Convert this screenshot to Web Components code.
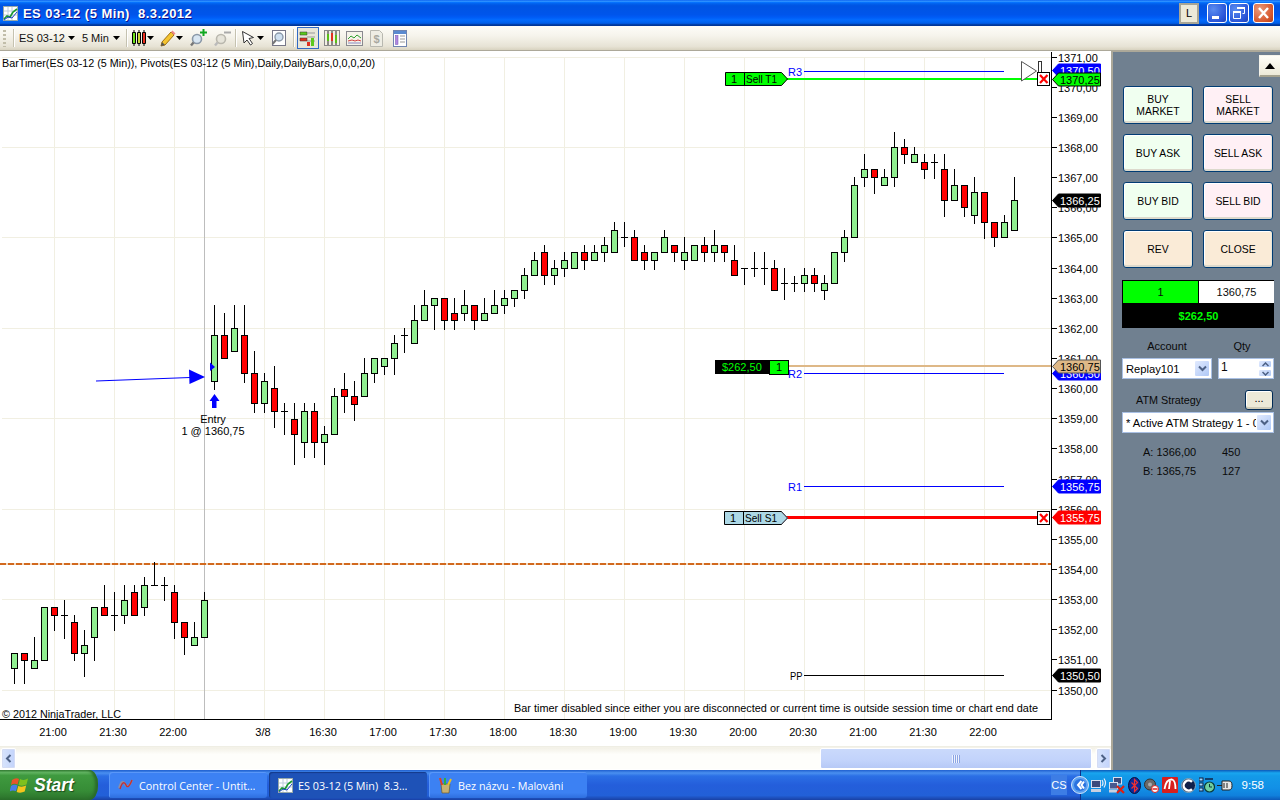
<!DOCTYPE html>
<html><head><meta charset="utf-8"><title>ES 03-12</title>
<style>
html,body{margin:0;padding:0;width:1280px;height:800px;overflow:hidden;background:#fff;font-family:"Liberation Sans",Arial,sans-serif;}
</style></head><body>
<xp-desktop>
  <xp-titlebar slot="title">ES 03-12 (5 Min)&nbsp; 8.3.2012</xp-titlebar>
  <chart-toolbar slot="toolbar"></chart-toolbar>
  <price-chart slot="chart"></price-chart>
  <h-scrollbar slot="scroll"></h-scrollbar>
  <trade-panel slot="panel"></trade-panel>
  <xp-taskbar slot="taskbar"></xp-taskbar>
</xp-desktop>
<script>
function el(name, css, html, after){
  customElements.define(name, class extends HTMLElement{
    constructor(){super();this.attachShadow({mode:'open'}).innerHTML='<style>'+css+'</style>'+html;}
    connectedCallback(){if(after)after(this.shadowRoot,this);}
  });
}
el('xp-desktop',`:host{display:grid;width:1280px;height:800px;grid-template-columns:1111px 169px;grid-template-rows:26px 25px 1fr 30px;}
  .t{grid-column:1/3;display:block}.b{grid-column:1/3}.left{display:flex;flex-direction:column;min-width:0}
`,`<div class="t"><slot name="title"></slot></div><div class="t"><slot name="toolbar"></slot></div>
<div class="left"><slot name="chart"></slot><slot name="scroll"></slot></div><slot name="panel"></slot><div class="b"><slot name="taskbar"></slot></div>`);

el('xp-titlebar',`:host{display:flex;align-items:center;height:26px;box-sizing:border-box;padding:0 3px;color:#fff;
  background:linear-gradient(180deg,#0058ee 0,#3593ff 4%,#288eff 6%,#127dff 8%,#036ffc 10%,#0262ee 14%,#0057e5 20%,#0054e3 24%,#0055eb 56%,#005bf5 66%,#026afe 76%,#0062ef 86%,#0052d6 92%,#0040ab 94%,#003092 100%);}
  .txt{font:bold 13px "Liberation Sans",sans-serif;margin-left:5px;flex:1;letter-spacing:.45px;text-shadow:1px 1px 0 #0f1089;white-space:pre}
  .l{width:20px;height:21px;box-sizing:border-box;border:2px solid #a8a595;background:#ece9d8;color:#000;font:11px "Liberation Sans",sans-serif;display:flex;align-items:center;justify-content:center;margin-right:8px}
  .w{width:20px;height:20px;box-sizing:border-box;border:1px solid #fff;border-radius:3px;background:radial-gradient(circle at 30% 30%,#5a8cf0,#2a55d8 70%,#1f43b4);margin-right:2px;display:block}
  .w.c{background:radial-gradient(circle at 30% 30%,#ea9a7c,#d85a30 65%,#b83c14);margin:0 3px 0 2px;width:21px}
`,`<svg width="15" height="15" viewBox="0 0 15 15"><rect x=".5" y=".5" width="14" height="14" fill="#fff" stroke="#9aa"/><path d="M1 5h13M1 9h13M5 1v13M9 1v13" stroke="#bcd" /><path d="M1 13l3-3 3 1 3-5 4-3" stroke="#1a9a30" stroke-width="1.6" fill="none"/><path d="M1 14l4-3 4 1 5-6" stroke="#1a40c0" fill="none"/></svg>
<span class="txt"><slot></slot></span><span class="l">L</span>
<span class="w"><svg width="18" height="18"><rect x="4" y="12" width="7" height="3" fill="#fff"/></svg></span>
<span class="w"><svg width="18" height="18"><path d="M7.5 3.5h7v6h-2M3.5 7.5h7v7h-7z" fill="none" stroke="#fff"/><path d="M7 4h8M3 8h8" stroke="#fff" stroke-width="2"/></svg></span>
<span class="w c"><svg width="19" height="18"><path d="M5 4l9 10M14 4l-9 10" stroke="#fff" stroke-width="2.4"/></svg></span>`);

const arrow=(m)=>`<svg style="margin-left:${m}px" width="7" height="4" viewBox="0 0 7 4"><path d="M0 0h7L3.5 4z" fill="#000"/></svg>`;
el('chart-toolbar',`:host{display:flex;align-items:center;height:25px;box-sizing:border-box;padding-left:3px;border-bottom:1px solid #aca899;background:linear-gradient(180deg,#fdfcf8 0,#f6f4ec 40%,#e7e3d5 85%,#d8d3c0 100%);font:11px "Liberation Sans",sans-serif;color:#111}
  .grip{width:3px;height:17px;background:repeating-linear-gradient(180deg,#c1bda9 0 2px,transparent 2px 4px);margin-right:7px}
  .sep{width:1px;height:18px;background:#c5c2b0;border-right:1px solid #fff}
  .i{display:flex;align-items:center;height:24px}
  svg{display:block}
  .act{width:22px;height:22px;box-sizing:border-box;border:1px solid #316ac5;background:#e8e6d9;display:flex;align-items:center;justify-content:center;margin-left:2px}
`,`<span class="grip"></span><span class="sep"></span>
<span class="i" style="margin-left:4px">ES 03-12${arrow(3)}</span>
<span class="i" style="margin-left:7px">5 Min${arrow(4)}</span>
<span class="sep" style="margin-left:6px"></span>
<span class="i" style="margin-left:3px"><svg width="16" height="18" viewBox="0 0 16 18"><g stroke="#000" stroke-linejoin="round"><rect x="1.5" y="3.5" width="3" height="11" fill="#6ee21a"/><rect x="6.5" y="3.5" width="3" height="11" fill="#c8d838"/><rect x="11.5" y="3.5" width="3" height="11" fill="#ee3020"/><path d="M3 1v2M3 15v2M8 1v2M8 15v2M13 1v2M13 15v2"/></g></svg>${arrow(0)}</span>
<span class="i" style="margin-left:6px"><svg width="16" height="18" viewBox="0 0 16 18"><path d="M2 13L11 3l3 3-9 10-4 1z" fill="#f4c430" stroke="#a07010"/><path d="M11 3l1.5-1.5 3 3L14 6z" fill="#e88"/><path d="M1 17l1-4 3 3z" fill="#555"/></svg>${arrow(0)}</span>
<span class="i" style="margin-left:7px"><svg width="17" height="18" viewBox="0 0 17 18"><circle cx="7" cy="10" r="4.5" fill="#d8e6f2" stroke="#8a98a8" stroke-width="1.6"/><path d="M3.5 13.5L1 16.5" stroke="#777" stroke-width="2.4"/><path d="M13.5 0v7M10 3.5h7" stroke="#10a820" stroke-width="2"/></svg></span>
<span class="i" style="margin-left:7px"><svg width="17" height="18" viewBox="0 0 17 18"><circle cx="7" cy="10" r="4.5" fill="#e6e4da" stroke="#bab8ae" stroke-width="1.6"/><path d="M3.5 13.5L1 16.5" stroke="#bbb" stroke-width="2.4"/><path d="M10 3.5h7" stroke="#aaa" stroke-width="2"/></svg></span>
<span class="sep" style="margin-left:4px"></span>
<span class="i" style="margin-left:4px"><svg width="14" height="16" viewBox="0 0 14 16"><path d="M1.5 1.5l11 6-4.5 1 3.5 5-2 1.5-3.5-5-3 3z" fill="#fff" stroke="#333"/></svg>${arrow(2)}</span>
<span class="i" style="margin-left:7px"><svg width="15" height="17" viewBox="0 0 15 17"><rect x="1.5" y=".5" width="13" height="15" fill="#fff" stroke="#778"/><circle cx="8" cy="7" r="4" fill="#cfe0f0" stroke="#8a98a8" stroke-width="1.4"/><path d="M5 10l-3.5 4" stroke="#777" stroke-width="2"/></svg></span>
<span class="sep" style="margin-left:7px"></span>
<span class="act"><svg width="17" height="18" viewBox="0 0 17 18"><path d="M1 3h7v3H1z" fill="#5bc81c" stroke="#333" stroke-width=".5"/><path d="M8 4h8M8 8h8M8 12h8" stroke="#999"/><path d="M1 9h7v3H1z" fill="#e03020" stroke="#333" stroke-width=".5"/><rect x="12" y="9" width="3" height="8" fill="#5bc81c"/><rect x="8" y="13" width="3" height="4" fill="#e03020"/></svg></span>
<span class="i" style="margin-left:5px"><svg width="16" height="18" viewBox="0 0 16 18"><rect x=".5" y="1.5" width="15" height="15" fill="#f2f0e4" stroke="#888"/><path d="M4 2v14M8 2v14M12 2v14" stroke="#222"/><rect x="3" y="5" width="2" height="7" fill="#58c018"/><rect x="7" y="4" width="2" height="8" fill="#e03020"/><rect x="11" y="6" width="2" height="8" fill="#58c018"/></svg></span>
<span class="i" style="margin-left:6px"><svg width="17" height="17" viewBox="0 0 17 17"><rect x=".5" y="1.5" width="16" height="14" fill="#f5f3ea" stroke="#8a8a90"/><path d="M2 9l3-3 3 2 3-3 4 3" stroke="#30a030" fill="none"/><path d="M2 11l4-1 3 1 3-1 3 1" stroke="#d04040" fill="none"/><path d="M2 13h13" stroke="#8888c0"/></svg></span>
<span class="i" style="margin-left:7px"><svg width="13" height="17" viewBox="0 0 13 17"><path d="M.5 .5h9l3 3v13H.5z" fill="#eeede4" stroke="#b8b8b0"/><text x="6.5" y="13" text-anchor="middle" font-size="11" font-weight="bold" fill="#a8a8a0" font-family="Liberation Sans">$</text></svg></span>
<span class="i" style="margin-left:10px"><svg width="14" height="17" viewBox="0 0 14 17"><rect x=".5" y=".5" width="13" height="16" fill="#fff" stroke="#6f84b0"/><rect x="1" y="1" width="12" height="3" fill="#5a8ad0"/><rect x="2.500" y="5.500" width="2.500" height="9" fill="#b088e0" stroke="#7050b0" stroke-width=".5"/><path d="M7 6h5M7 9h5M7 12h5" stroke="#999"/></svg></span>`);

const Y=p=>Math.floor(690-(p-1350)*30.14)+.5;
const candles=[
[14,653,653,668,683,1],[24,653,653,660,683,0],[34,637,660,668,668,1],[44,607,607,660,660,1],[54,607,607,615,630,0],[64,600,615,615,638,2],[74,615,622,653,660,0],[84,630,645,653,676,1],[94,607,607,637,660,1],[104,585,607,615,615,0],[114,592,615,615,630,2],[124,585,600,615,623,1],[134,585,592,615,615,0],[144,577,585,607,615,1],[154,562,585,585,585,2],[164,577,585,585,600,2],[174,585,592,622,638,0],[184,622,622,637,654,0],[194,622,637,645,645,1],[204,592,600,637,637,1],
[214,305,335,381,389,1],[224,313,335,358,358,0],[234,305,328,351,351,1],[244,305,335,373,382,0],[254,351,373,403,412,0],[264,373,381,403,412,1],[274,366,388,411,427,0],[284,403,411,411,434,2],[294,403,419,434,464,0],[304,403,411,442,457,1],[314,403,411,442,457,0],[324,426,434,442,464,1],[334,388,396,434,434,1],[344,373,389,396,412,0],[354,381,396,404,420,0],[364,358,373,396,396,1],[374,358,358,373,382,1],[384,358,358,366,374,1],[394,335,343,358,374,1],[404,328,335,335,352,2],[414,305,320,343,343,1],[424,290,305,320,320,1],[434,298,298,305,329,1],[444,298,298,320,329,0],[454,298,313,320,329,0],[464,290,305,313,320,1],[474,305,305,320,329,0],[484,298,313,320,320,1],[494,290,305,313,313,1],[504,290,298,305,313,1],[514,290,290,298,306,1],[524,268,275,290,298,1],[534,252,260,275,275,1],[544,245,252,275,284,0],[554,260,268,275,284,1],[564,252,260,268,276,1],[574,252,252,268,268,1],[584,245,252,260,269,0],[594,245,252,260,260,1],[604,237,245,252,261,1],[614,222,230,252,252,1],[624,222,237,237,246,2],[634,230,237,260,260,0],[644,245,252,260,269,0],[654,252,252,260,269,1],[664,230,237,252,252,1],[674,245,245,252,261,0],[684,237,252,260,269,1],[694,245,245,260,260,1],[704,237,245,252,261,0],[714,230,245,252,261,1],[724,245,245,252,261,0],[734,245,260,275,275,0],[744,268,268,268,284,2],[754,252,268,268,276,2],[764,252,268,268,284,2],[774,260,268,290,290,0],[784,268,283,283,299,2],[794,276,283,283,291,2],[804,268,275,283,291,1],[814,268,275,283,291,0],[824,275,283,290,299,1],[834,252,252,283,283,1],[844,230,237,252,261,1],[854,177,185,237,237,1],[864,154,169,177,186,1],[874,169,169,177,193,0],[884,169,177,185,185,1],[894,132,147,177,186,1],[904,139,147,154,163,0],[914,147,154,162,162,1],[924,154,162,169,178,0],[934,154,162,162,178,2],[944,154,169,200,216,0],[954,169,185,200,200,1],[964,185,185,207,216,0],[974,177,192,215,223,1],[984,192,192,222,238,0],[994,222,222,237,246,0],[1004,215,222,237,237,1],[1014,177,200,230,230,1]];
function buildChart(){
  let s='';
  const grid='#f1efe2';
  [1371,1368,1365,1362,1359,1356,1353,1350].forEach(p=>{s+=`<path d="M2 ${Y(p)}H1051" stroke="${grid}"/>`;});
  [54,114,174,264,324,384,444,504,564,624,684,744,804,864,924,984].forEach(x=>{s+=`<path d="M${x+.5} 58V719" stroke="${grid}"/>`;});
  s+=`<path d="M204.500 58V719" stroke="#bdbdbd"/>`;
  s+=`<path d="M0 563.5H1051" stroke="#f3d9c0" stroke-width="2"/><path d="M0 563.5H1051" stroke="#d2691e" stroke-width="2" stroke-dasharray="6 2"/>`;
  candles.forEach(([x,wt,bt,bb,wb,c])=>{
    const cx=x+.5;
    s+=`<path d="M${cx} ${wt}V${wb+1}" stroke="#000"/>`;
    if(c===2) s+=`<path d="M${x-3} ${bt+.5}H${x+4}" stroke="#000"/>`;
    else s+=`<rect x="${x-2.5}" y="${bt+.5}" width="6" height="${bb-bt}" fill="${c?'#90ee90':'#f00'}" stroke="#000"/>`;
  });
  const T=(x,y,t,o='')=>`<text x="${x}" y="${y}" ${o}>${t}</text>`;
  const fit=n=>`textLength="${n}" lengthAdjust="spacingAndGlyphs"`;
  s+=T(2,67,'BarTimer(ES 03-12 (5 Min)), Pivots(ES 03-12 (5 Min),Daily,DailyBars,0,0,0,20)',fit(373));
  s+=T(2,718,'© 2012 NinjaTrader, LLC',fit(119));
  s+=T(514,712,'Bar timer disabled since either you are disconnected or current time is outside session time or chart end date',fit(524));
  // pivots
  [['R3',71,'#00f'],['R2',373,'#00f'],['R1',486,'#00f'],['PP',675,'#000']].forEach(([n,y,c])=>{
    s+=`<path d="M804 ${y+.5}H1004" stroke="${c}"/>`+T(n==='PP'?790:788,y+5,n,`fill="${c}" ${n==='PP'?fit(12.5):''}`);
  });
  // entry
  s+=`<path d="M96 381L190 377.500" stroke="#00f" stroke-width="1.2"/><path d="M189 369.500L205 377 189.500 384z" fill="#00f"/><path d="M210 362.500L215 367 210 371z" fill="#00f"/><path d="M214.500 394L219.500 401H216.500V408H212V401H209.500z" fill="#00f"/>`;
  s+=T(213,423,'Entry','text-anchor="middle"')+T(213,435,'1 @ 1360,75','text-anchor="middle"');
  // position
  s+=`<path d="M787 366H1052" stroke="#deb887" stroke-width="2"/><rect x="715" y="360" width="54" height="14" fill="#000"/><rect x="769" y="360" width="19" height="14" fill="#0f0" stroke="#000"/>`;
  s+=T(722,371,'$262,50','fill="#0f0"')+T(776,371,'1');
  // orders
  s+=`<path d="M785 78.500H1037" stroke="#0f0" stroke-width="2"/><path d="M785 517H1037" stroke="#f00" stroke-width="3"/>`;
  s+=`<path d="M725.500 72.500H781.500L787.500 79 781.500 85.500H725.500z" fill="#0f0" stroke="#000"/><path d="M744.500 72V86" stroke="#000"/>`+T(731,83,'1')+T(746,83,'Sell T1',fit(31));
  s+=`<path d="M724.500 511.500H781.500L787.500 518 781.500 524.500H724.500z" fill="#add8e6" stroke="#000"/><path d="M781.500 512L787.500 518 781.500 524" fill="none" stroke="#778"/><path d="M743.500 511V525" stroke="#000"/>`+T(730,522,'1')+T(745,522,'Sell S1',fit(32));
  s+=`<path d="M1021.500 61.500L1036.500 71 1021.500 81z" fill="#fff" stroke="#555"/>`;
  s+=`<rect x="1038.500" y="61.500" width="3" height="20" fill="#fff" stroke="#333"/>`;
  const X=(y)=>`<rect x="1037.500" y="${y+.5}" width="12" height="13" fill="#fff" stroke="#000"/><path d="M1040 ${y+3}L1047.500 ${y+11}M1047.500 ${y+3}L1040 ${y+11}" stroke="#f00" stroke-width="2.200"/>`;
  s+=X(72)+X(511);
  // axes
  s+=`<path d="M1051.500 52V720M0 719.500H1052" stroke="#000"/>`;
  for(let p=1350;p<=1371;p++){const y=Y(p);s+=`<path d="M1052 ${y}H1057" stroke="#000"/>`+T(1058,y+4,p+',00');}
  [['21:00',53],['21:30',113],['22:00',173],['3/8',263],['16:30',323],['17:00',383],['17:30',443],['18:00',503],['18:30',563],['19:00',623],['19:30',683],['20:00',743],['20:30',803],['21:00',863],['21:30',923],['22:00',983]].forEach(([t,x])=>{s+=T(x,736,t,'text-anchor="middle"');});
  // tags
  const tag=(c,fill,txt,str,v)=>`<path d="M1052.500 ${c}L1058.500 ${c-6.500}H1100.500V${c+6.500}H1058.500z" fill="${fill}" stroke="${str}"/>`+T(1060,c+4,v,`fill="${txt}"`);
  s+=tag(70.5,'#00f','#fff','#00f','1370,50')+tag(79.5,'#0f0','#000','#000','1370,25')+tag(200.5,'#000','#fff','#000','1366,25')+tag(373.5,'#00f','#fff','#00f','1360,50')+tag(366.5,'#deb887','#000','#555','1360,75')+tag(486.5,'#00f','#fff','#00f','1356,75')+tag(517.5,'#f00','#fff','#f00','1355,75')+tag(675.5,'#000','#fff','#000','1350,50');
  return s;
}
el('price-chart',`:host{display:block;width:1111px;height:695px;background:#fff;overflow:hidden;flex:none}
  svg{display:block;font:11px "Liberation Sans",Arial,sans-serif;fill:#000;shape-rendering:auto}
  path,rect{shape-rendering:crispEdges}`,
`<svg width="1111" height="695" viewBox="0 51 1111 695">${buildChart()}</svg>`,
(r)=>{r.querySelectorAll('path').forEach(p=>{const d=p.getAttribute('d');if(/L/.test(d))p.style.shapeRendering='auto';});});

el('h-scrollbar',`:host{display:flex;align-items:stretch;width:1111px;height:24px;box-sizing:border-box;padding:1px 0;background:linear-gradient(180deg,#f3f1e7,#fdfcf8 20%,#fff);border-top:1px solid #efeee4}
  .b{width:15px;margin:0 0 0 1px;box-sizing:border-box;border:1px solid #fff;border-radius:2px;background:linear-gradient(90deg,#d8e4fc,#c2d3fb);display:flex;align-items:center;justify-content:center;flex:none;box-shadow:0 0 0 1px #d4dcf4 inset}
  .tr{flex:1;display:flex;justify-content:flex-end;padding-right:3px;background:linear-gradient(180deg,#f3f1e7,#fefefb 30%)}
  .th{width:272px;box-sizing:border-box;border:1px solid #fff;border-radius:2px;background:linear-gradient(180deg,#cad9fb,#c2d3fb 60%,#b6c9f6);display:flex;align-items:center;justify-content:center}
  .g{width:8px;height:8px;background:repeating-linear-gradient(90deg,#eef3fe 0 1px,#8ca5e4 1px 2px)}`,
`<span class="b"><svg width="7" height="9" viewBox="0 0 7 9"><path d="M5.500 1L2 4.500 5.500 8" fill="none" stroke="#4d6185" stroke-width="2"/></svg></span><span class="tr"><span class="th"><span class="g"></span></span></span><span class="b"><svg width="7" height="9" viewBox="0 0 7 9"><path d="M1.500 1L5 4.500 1.500 8" fill="none" stroke="#4d6185" stroke-width="2"/></svg></span>`);

el('order-button',`:host{display:flex;align-items:center;justify-content:center;text-align:center;box-sizing:border-box;width:70px;height:38px;padding-top:2px;border:1px solid #003c74;border-radius:3px;background:var(--bg,#f0fff0);font:10.4px/12px "Liberation Sans",sans-serif;color:#000;box-shadow:inset 0 -2px 0 #dcd9cc,inset -1px 0 0 #e8e6da,inset 1px 1px 0 #fff}`,`<slot></slot>`);

el('xp-combo',`:host{display:flex;align-items:center;box-sizing:border-box;height:21px;background:#fff;border:1px solid #a9c0e4;font:11.2px "Liberation Sans",sans-serif;color:#000;padding:1px 1px 1px 3px}
  .t{flex:1;min-width:0;overflow:hidden;white-space:nowrap;padding-top:1px}
  .b{width:16px;align-self:stretch;flex:none;box-sizing:border-box;border:1px solid #fff;border-radius:2px;background:linear-gradient(135deg,#e1eafe,#aec8f7);display:flex;align-items:center;justify-content:center}`,
`<span class="t"><slot></slot></span><span class="b"><svg width="9" height="7" viewBox="0 0 9 7"><path d="M1 1.500L4.500 5 8 1.500" fill="none" stroke="#4d6185" stroke-width="2"/></svg></span>`);

el('trade-panel',`:host{display:flex;flex-direction:column;box-sizing:border-box;width:169px;height:719px;border-left:2px solid #aca899;background:#708090;color:#0a0a0a;font:11px "Liberation Sans",sans-serif;padding:3px 0 0 9px;border-top:1px solid #aca899}
  .up{align-self:flex-end;width:21px;height:22px;box-sizing:border-box;background:linear-gradient(180deg,#fffef8,#ece9d8);border:1px solid #f5f3ea;border-right:0;border-bottom:2px solid #a5a28f;display:flex;align-items:center;justify-content:center}
  .grid{display:grid;grid-template-columns:70px 70px;gap:10px;margin-top:9px;margin-left:1px}
  .buy{--bg:#f0fff0}.sell{--bg:#fff0f5}.lin{--bg:#faebd7}
  .pos{display:grid;grid-template-columns:76px 75px;grid-template-rows:22px 25px;width:152px;height:48px;box-sizing:border-box;margin-top:12px;background:#000;border:1px solid #000;column-gap:0}
  .pos div{display:flex;align-items:center;justify-content:center;font-size:11px}
  .g{background:#0f0;border-right:1px solid #000;padding-bottom:1px;box-sizing:border-box}.w{background:#fff;padding-bottom:1px;box-sizing:border-box}
  .pnl{grid-column:1/3;color:#0f0;font-weight:bold}
  .lbl{display:flex;margin-top:11px;height:14px;align-items:center}
  .lbl span{text-align:center}
  .row{display:flex;gap:6px;margin-top:5px}
  .spin{display:flex;box-sizing:border-box;width:56px;height:21px;background:#fff;border:1px solid #a9c0e4;font:12px "Liberation Sans",sans-serif;padding:1px 1px 1px 2px;justify-content:space-between}
  .sb{width:14px;display:flex;flex-direction:column;gap:1px}
  .sb i{flex:1;display:flex;align-items:center;justify-content:center;border:1px solid #fff;border-radius:2px;background:linear-gradient(135deg,#e1eafe,#aec8f7)}
  .atm{display:flex;align-items:center;justify-content:space-between;margin-top:11px;height:20px;width:151px;padding-left:14px;box-sizing:border-box}
  .atm span:first-child{font-size:10.8px}
  .dots{width:28px;height:20px;box-sizing:border-box;border:1px solid #002a55;border-radius:3px;background:#ece9d8;box-shadow:inset 0 -2px 0 #cfcbb8,inset 1px 1px 0 #fff;text-align:center;line-height:15px;color:#000}
  .q{display:grid;grid-template-columns:79px auto;row-gap:5px;margin:12px 0 0 21px;line-height:14px}
`,`<span class="up"><svg width="10" height="6"><path d="M0 6L5 0l5 6z" fill="#000"/></svg></span>
<div class="grid">
<order-button class="buy">BUY<br>MARKET</order-button><order-button class="sell">SELL<br>MARKET</order-button>
<order-button class="buy">BUY ASK</order-button><order-button class="sell">SELL ASK</order-button>
<order-button class="buy">BUY BID</order-button><order-button class="sell">SELL BID</order-button>
<order-button class="lin">REV</order-button><order-button class="lin">CLOSE</order-button></div>
<div class="pos"><div class="g">1</div><div class="w">1360,75</div><div class="pnl">$262,50</div></div>
<div class="lbl"><span style="width:90px">Account</span><span style="width:60px;margin-left:0">Qty</span></div>
<div class="row"><xp-combo style="width:90px">Replay101</xp-combo><div class="spin"><span>1</span><span class="sb"><i><svg width="7" height="5"><path d="M.5 4L3.500 1l3 3" fill="none" stroke="#4d6185" stroke-width="1.500"/></svg></i><i><svg width="7" height="5"><path d="M.5 1l3 3 3-3" fill="none" stroke="#4d6185" stroke-width="1.500"/></svg></i></span></div></div>
<div class="atm"><span>ATM Strategy</span><span class="dots">...</span></div>
<xp-combo style="width:152px;margin-top:2px">* Active ATM Strategy 1 - 0</xp-combo>
<div class="q"><span>A: 1366,00</span><span>450</span><span>B: 1365,75</span><span>127</span></div>`);

el('task-button',`:host{display:flex;align-items:center;box-sizing:border-box;width:158px;height:26px;padding:0 8px 0 9px;border-radius:3px;color:#fff;font:11px "Open Sans","Liberation Sans",sans-serif;background:linear-gradient(180deg,#3c81f3,#3c81f3 80%,#2e6ede);box-shadow:inset 1px 1px 0 #5a97f8;white-space:nowrap;overflow:hidden}
  :host([active]){background:#1e52b7;box-shadow:inset 1px 1px 1px #143a8a}
  ::slotted(svg){flex:none;margin-right:5px}
  .t{overflow:hidden;font-size:10.8px}`,`<slot name="icon"></slot><span class="t"><slot></slot></span>`);

el('xp-taskbar',`:host{display:flex;align-items:center;height:30px;position:relative;background:linear-gradient(180deg,#1f5fcf 0,#4a90f0 3px,#2b6fe5 6px,#245edb 50%,#2260d8 85%,#1941a5 100%);color:#fff;font:11px "Liberation Sans",sans-serif}
  .start{width:98px;height:30px;box-sizing:border-box;border-radius:0 9px 9px 0/0 14px 14px 0;background:linear-gradient(180deg,#3c8a3c 0,#62b462 8%,#3f9a3f 18%,#368c36 70%,#2b702b 100%);box-shadow:inset -3px 0 3px #2a6a2a;display:flex;align-items:center;padding-left:10px;font:italic bold 17.5px "Liberation Sans",sans-serif;text-shadow:1px 1px 1px #1c4a1c;gap:4px;flex:none}
  .tasks{display:flex;gap:2px;margin-left:11px;align-items:center;flex:1}
  .cs{width:16px;height:20px;background:#3d7de5;display:flex;align-items:center;justify-content:center;margin-right:13px;font-size:11px}
  .tray{display:flex;align-items:center;height:30px;width:200px;flex:none;box-sizing:border-box;border-left:1px solid #0f2f8a;background:linear-gradient(180deg,#0c59b9 0,#19a6ef 3px,#139ae8 6px,#1290e6 60%,#1080dc 85%,#0c59b9 100%);padding-left:9px;gap:3px}
  .chev{position:absolute;left:1071px;top:6px}
  .clock{margin-left:auto;margin-right:16px;font-size:11.500px}
  .tray svg{flex:none}`,
`<span class="start"><svg width="20" height="19" viewBox="0 0 20 19"><path d="M2 4q4-3 7-1l-1.500 5.500Q4 7 1 9z" fill="#e8542a"/><path d="M10 3q4 2 8-.5L16.500 8.500q-4 2-8 .5z" fill="#7ec11e"/><path d="M1 10q3-2 6.500-.5L6 15q-4-1-6.500.5z" fill="#4a7ce8"/><path d="M8.200 10q4 1.500 8-.5l-1.500 6q-4 2-8 .5z" fill="#f6c51c"/></svg>Start</span>
<div class="tasks">
<task-button><svg slot="icon" width="16" height="16" viewBox="0 0 16 16"><path d="M1 11Q4 1 7 7t7-4" fill="none" stroke="#8a8ea8" stroke-width="2"/><path d="M2 12Q5 2 8 8q2 5 6-5" fill="none" stroke="#c83030" stroke-width="1.400"/></svg>Control Center - Untit…</task-button>
<task-button active><svg slot="icon" width="15" height="15" viewBox="0 0 15 15"><rect x=".5" y=".5" width="14" height="14" fill="#fff" stroke="#9aa"/><path d="M1 5h13M1 9h13M5 1v13M9 1v13" stroke="#bcd"/><path d="M1 13l3-3 3 1 3-5 4-3" stroke="#1a9a30" stroke-width="1.600" fill="none"/><path d="M1 14l4-3 4 1 5-6" stroke="#1a40c0" fill="none"/></svg>ES 03-12 (5 Min)&nbsp; 8.3…</task-button>
<task-button><svg slot="icon" width="15" height="17" viewBox="0 0 15 17"><path d="M3 7h9l-1 9H4z" fill="#c8b070" stroke="#6a5a30" stroke-width=".7"/><path d="M4 8L2 1" stroke-width="2" stroke="#e04020"/><path d="M7 8V1" stroke="#30b040" stroke-width="2"/><path d="M10 8l3-6" stroke="#e8c020" stroke-width="2"/></svg>Bez názvu - Malování</task-button>
</div>
<span class="cs">CS</span>
<div class="tray">
<svg width="17" height="16" viewBox="0 0 17 16"><rect x="1.500" y="3.500" width="9" height="7" fill="#3b4a7c" stroke="#d8e0f0"/><rect x="1" y="12" width="10" height="3" fill="#c8d0e0"/><path d="M12 3q2 3 0 6M14 1.500q3 4.500 0 9" fill="none" stroke="#e8eef8" stroke-width="1.200"/></svg>
<svg style="margin-left:-2px" width="17" height="17" viewBox="0 0 17 17"><rect x="5.500" y=".5" width="8" height="6.500" fill="#3b4a7c" stroke="#d8e0f0"/><rect x="1.500" y="5.500" width="8" height="6.500" fill="#4a5a90" stroke="#d8e0f0"/><rect x="1" y="13" width="8" height="2.500" fill="#c8d0e0"/><path d="M9 9l7 7M16 9l-7 7" stroke="#e02010" stroke-width="2.200"/></svg>
<svg width="13" height="17" viewBox="0 0 13 17"><ellipse cx="6.500" cy="8.500" rx="6" ry="8" fill="#0a2a9a" stroke="#08103a"/><path d="M3.500 5.500l6 6-3 3v-12l3 3-6 6" fill="none" stroke="#f03030" stroke-width="1.200"/></svg>
<svg width="15" height="15" viewBox="0 0 15 15"><circle cx="6" cy="6.500" r="5.500" fill="#6a6a6a" stroke="#333"/><circle cx="6" cy="6.500" r="2" fill="#aaa"/><circle cx="11" cy="11" r="3.500" fill="#fff" stroke="#e02020"/><path d="M8.500 11h5" stroke="#e02020" stroke-width="1.500"/></svg>
<svg width="16" height="16" viewBox="0 0 16 16"><rect width="16" height="16" fill="#d81e1e" rx="1"/><path d="M2.500 12Q4 2 10 2.500q3.500 1 3.500 9.500M8 4l-1 8" fill="none" stroke="#fff" stroke-width="1.800"/></svg>
<svg width="15" height="15" viewBox="0 0 15 15"><circle cx="7.500" cy="7.500" r="7" fill="#10204a" stroke="#8ab"/><path d="M11 3.800A5 5 0 1 0 11 11.200" fill="none" stroke="#fff" stroke-width="2.500"/></svg>
<svg width="16" height="16" viewBox="0 0 16 16"><rect x="0" y="1" width="4" height="3" fill="#9ed8ff" stroke="#124"/><rect x="0" y="6" width="4" height="3" fill="#9ed8ff" stroke="#124"/><rect x="0" y="11" width="4" height="3" fill="#9ed8ff" stroke="#124"/><path d="M6 2h8" stroke="#124" stroke-width="1.500"/><circle cx="10.500" cy="10" r="5" fill="#70d0a0" stroke="#0a3a3a" stroke-width="1.200"/><path d="M10.500 7v3h2.500" stroke="#0a3a3a" fill="none"/></svg>
<svg style="margin-left:-1px" width="16" height="13" viewBox="0 0 16 13"><path d="M5 2h7q3 0 3 4.500T12 11H5z" fill="#e8e8e8" stroke="#222"/><path d="M0 6.500h5M7 4v5M10 4v5" stroke="#222"/></svg>
<span class="clock">9:58</span>
</div>
<svg class="chev" width="18" height="18" viewBox="0 0 18 18"><circle cx="9" cy="9" r="8.500" fill="#5aa0f0" stroke="#cfe4fb"/><circle cx="9" cy="9" r="6" fill="#2a72e0"/><path d="M10.500 5L7 9l3.500 4M13 5.500L10.500 9 13 12.500" fill="none" stroke="#fff" stroke-width="2"/></svg>`);
</script>
</body></html>
